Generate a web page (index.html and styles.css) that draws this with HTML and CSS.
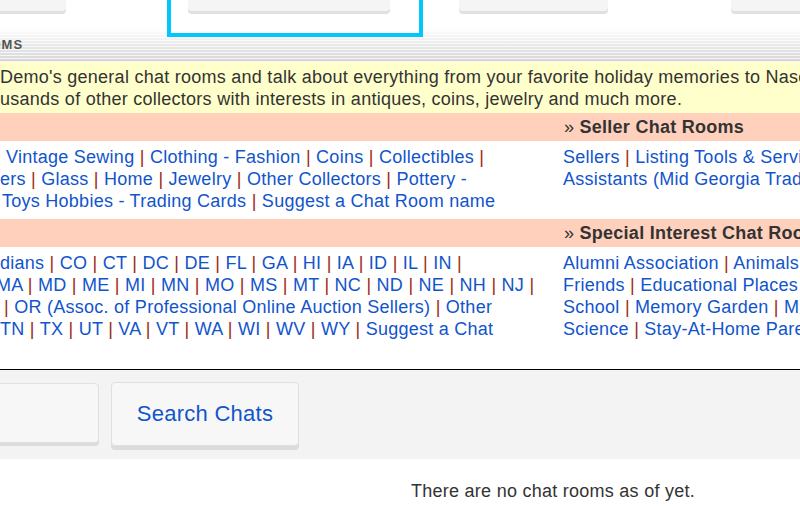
FILE: index.html
```html
<!DOCTYPE html>
<html lang="en">
<head>
    <meta charset="UTF-8">
    <meta name="viewport" content="width=device-width, initial-scale=1.0">
    <title>Chat Rooms</title>
    <link rel="stylesheet" href="styles.css">
</head>
<body>
    <div class="nav">
        <div class="nav-btn first"></div>
        <div class="nav-item current">
            <div class="nav-btn wide"></div>
        </div>
        <div class="nav-btn third"></div>
        <div class="nav-btn fourth"></div>
    </div>

    <div class="section-title">ROOMS</div>

    <div class="intro">
        <div class="line">Demo's general chat rooms and talk about everything from your favorite holiday memories to Nascar racing and gardening.</div>
        <div class="line">usands of other collectors with interests in antiques, coins, jewelry and much more.</div>
    </div>

    <div class="rooms-head">
        <div></div>
        <div class="right"><span class="raquo">&raquo;</span> Seller Chat Rooms</div>
    </div>
    <div class="rooms-body">
        <div class="left">
            <div class="line in6"><a href="#">Vintage Sewing</a> <span class="sep">|</span> <a href="#">Clothing - Fashion</a> <span class="sep">|</span> <a href="#">Coins</a> <span class="sep">|</span> <a href="#">Collectibles</a> <span class="sep">|</span></div>
            <div class="line"><a href="#">ers</a> <span class="sep">|</span> <a href="#">Glass</a> <span class="sep">|</span> <a href="#">Home</a> <span class="sep">|</span> <a href="#">Jewelry</a> <span class="sep">|</span> <a href="#">Other Collectors</a> <span class="sep">|</span> <a href="#">Pottery -</a></div>
            <div class="line in2"><a href="#">Toys Hobbies - Trading Cards</a> <span class="sep">|</span> <a href="#">Suggest a Chat Room name</a></div>
        </div>
        <div class="right">
            <div class="line"><a href="#">Sellers</a> <span class="sep">|</span> <a href="#">Listing Tools &amp; Services</a> <span class="sep">|</span> <a href="#">Auction</a></div>
            <div class="line"><a href="#">Assistants (Mid Georgia Trading Post)</a></div>
        </div>
    </div>

    <div class="rooms-head">
        <div></div>
        <div class="right"><span class="raquo">&raquo;</span> Special Interest Chat Rooms</div>
    </div>
    <div class="rooms-body last">
        <div class="left">
            <div class="line"><a href="#">dians</a> <span class="sep">|</span> <a href="#">CO</a> <span class="sep">|</span> <a href="#">CT</a> <span class="sep">|</span> <a href="#">DC</a> <span class="sep">|</span> <a href="#">DE</a> <span class="sep">|</span> <a href="#">FL</a> <span class="sep">|</span> <a href="#">GA</a> <span class="sep">|</span> <a href="#">HI</a> <span class="sep">|</span> <a href="#">IA</a> <span class="sep">|</span> <a href="#">ID</a> <span class="sep">|</span> <a href="#">IL</a> <span class="sep">|</span> <a href="#">IN</a> <span class="sep">|</span></div>
            <div class="line out4"><a href="#">MA</a> <span class="sep">|</span> <a href="#">MD</a> <span class="sep">|</span> <a href="#">ME</a> <span class="sep">|</span> <a href="#">MI</a> <span class="sep">|</span> <a href="#">MN</a> <span class="sep">|</span> <a href="#">MO</a> <span class="sep">|</span> <a href="#">MS</a> <span class="sep">|</span> <a href="#">MT</a> <span class="sep">|</span> <a href="#">NC</a> <span class="sep">|</span> <a href="#">ND</a> <span class="sep">|</span> <a href="#">NE</a> <span class="sep">|</span> <a href="#">NH</a> <span class="sep">|</span> <a href="#">NJ</a> <span class="sep">|</span></div>
            <div class="line in4"><span class="sep">|</span> <a href="#">OR (Assoc. of Professional Online Auction Sellers)</a> <span class="sep">|</span> <a href="#">Other</a></div>
            <div class="line"><a href="#">TN</a> <span class="sep">|</span> <a href="#">TX</a> <span class="sep">|</span> <a href="#">UT</a> <span class="sep">|</span> <a href="#">VA</a> <span class="sep">|</span> <a href="#">VT</a> <span class="sep">|</span> <a href="#">WA</a> <span class="sep">|</span> <a href="#">WI</a> <span class="sep">|</span> <a href="#">WV</a> <span class="sep">|</span> <a href="#">WY</a> <span class="sep">|</span> <a href="#">Suggest a Chat</a></div>
        </div>
        <div class="right">
            <div class="line"><a href="#">Alumni Association</a> <span class="sep">|</span> <a href="#">Animals &amp; Pets</a></div>
            <div class="line"><a href="#">Friends</a> <span class="sep">|</span> <a href="#">Educational Places</a> <span class="sep">|</span> <a href="#">Hobbies</a></div>
            <div class="line"><a href="#">School</a> <span class="sep">|</span> <a href="#">Memory Garden</a> <span class="sep">|</span> <a href="#">Military</a></div>
            <div class="line"><a href="#">Science</a> <span class="sep">|</span> <a href="#">Stay-At-Home Parents</a></div>
        </div>
    </div>

    <div class="search-bar">
        <input type="text" class="search-input">
        <button class="search-btn">Search Chats</button>
    </div>

    <p class="empty">There are no chat rooms as of yet.</p>
</body>
</html>
```

FILE: styles.css
```css
body {
    margin: 0;
    width: 800px;
    height: 510px;
    overflow: hidden;
    font-family: "Liberation Sans", Arial, sans-serif;
    font-size: 18px;
    letter-spacing: 0.26px;
    color: #333333;
    background-color: #ffffff;
}
a {
    color: #1155cc;
    text-decoration: none;
}
.sep {
    color: #9c2a12;
}
.line {
    white-space: nowrap;
    line-height: 22px;
}
.in2 {
    text-indent: 2px;
}
.in4 {
    text-indent: 4px;
}
.in6 {
    text-indent: 6px;
}
.out4 {
    text-indent: -4px;
}

/* top tabs */
.nav {
    display: flex;
    align-items: flex-start;
    height: 28px;
}
.nav-btn {
    flex: none;
    height: 40px;
    margin-top: -29px;
    background-color: #f5f5f5;
    border-radius: 4px;
    box-shadow: 0 3px 0 #e1e1e1;
}
.nav-btn.first {
    width: 200px;
    margin-left: -134px;
}
.nav-item.current {
    position: relative;
    z-index: 1;
    flex: none;
    margin-left: 101px;
    padding: 0 29px 22px 17px;
    border: 4px solid #00c8ff;
    border-top: none;
    background-color: #ffffff;
}
.nav-btn.wide {
    width: 202px;
}
.nav-btn.third {
    width: 149px;
    margin-left: 36px;
}
.nav-btn.fourth {
    width: 200px;
    margin-left: 123px;
}

.section-title {
    height: 34px;
    line-height: 34px;
    font-size: 13px;
    font-weight: bold;
    letter-spacing: 1px;
    color: #555555;
    text-indent: -31px;
    white-space: nowrap;
    background:
        repeating-linear-gradient(to bottom, rgba(255, 255, 255, 0.75) 0 1px, rgba(255, 255, 255, 0) 1px 3px),
        linear-gradient(to bottom, #ffffff, #d4d4d4);
}

.intro {
    padding: 4px 0 3px;
    background-color: #ffffcc;
}

.rooms-head {
    display: grid;
    grid-template-columns: 562px 1fr;
    height: 28px;
    line-height: 28px;
    font-weight: bold;
    white-space: nowrap;
    background-color: #ffd1bd;
}
.rooms-head .right {
    padding-left: 2px;
}
.raquo {
    font-weight: normal;
}
.rooms-body {
    display: grid;
    grid-template-columns: 562px 1fr;
    padding: 5px 0 7px;
}
.rooms-body .right {
    padding-left: 1px;
}
.rooms-body.last {
    margin-bottom: 22px;
}

.search-bar {
    display: flex;
    align-items: flex-start;
    height: 77px;
    padding-top: 12px;
    border-top: 1px solid #000000;
    background-color: #f3f3f3;
}
.search-input {
    flex: none;
    box-sizing: border-box;
    width: 199px;
    height: 60px;
    margin: 1px 0 0 -100px;
    border: 1px solid #e0e0e0;
    border-radius: 4px;
    background-color: #f7f7f7;
    box-shadow: 0 3px 0 #dcdcdc;
}
.search-btn {
    flex: none;
    box-sizing: border-box;
    width: 188px;
    height: 64px;
    margin-left: 12px;
    border: 1px solid #e0e0e0;
    border-radius: 4px;
    background-color: #f7f7f7;
    box-shadow: 0 4px 0 #dcdcdc;
    font-family: "Liberation Sans", Arial, sans-serif;
    font-size: 22px;
    letter-spacing: 0.25px;
    color: #1155cc;
    cursor: pointer;
}

.empty {
    margin: 0;
    padding: 21px 0 0 411px;
    line-height: 22px;
}
```
